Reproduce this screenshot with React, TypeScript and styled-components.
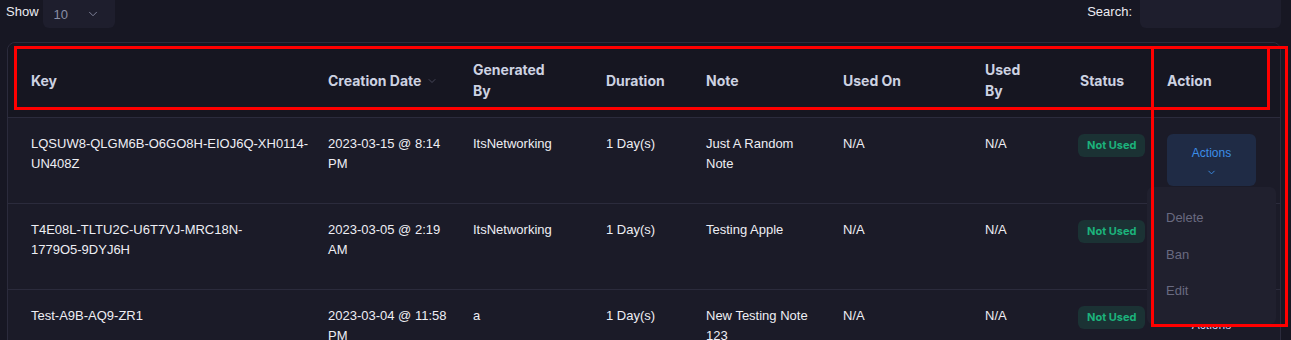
import React from "react";
import styled, { createGlobalStyle } from "styled-components";
import { ChevronDown } from "lucide-react";

const GlobalStyle = createGlobalStyle`
  body {
    margin: 0;
    background: #171723;
    font-family: "Liberation Sans", Arial, sans-serif;
    color: #e8e8ef;
    overflow: hidden;
  }
`;

interface KeyRow {
  key: string[];
  created: string;
  by: string;
  duration: string;
  note: string;
  usedOn: string;
  usedBy: string;
}

// keys wrap at the same spots as the live table
const rows: KeyRow[] = [
  {
    key: ["LQSUW8-QLGM6B-O6GO8H-EIOJ6Q-XH0114-", "UN408Z"],
    created: "2023-03-15 @ 8:14 PM",
    by: "ItsNetworking",
    duration: "1 Day(s)",
    note: "Just A Random Note",
    usedOn: "N/A",
    usedBy: "N/A",
  },
  {
    key: ["T4E08L-TLTU2C-U6T7VJ-MRC18N-", "1779O5-9DYJ6H"],
    created: "2023-03-05 @ 2:19 AM",
    by: "ItsNetworking",
    duration: "1 Day(s)",
    note: "Testing Apple",
    usedOn: "N/A",
    usedBy: "N/A",
  },
  {
    key: ["Test-A9B-AQ9-ZR1"],
    created: "2023-03-04 @ 11:58 PM",
    by: "a",
    duration: "1 Day(s)",
    note: "New Testing Note 123",
    usedOn: "N/A",
    usedBy: "N/A",
  },
];

const colWidths = [320, 145, 133, 100, 137, 142, 95, 87, 113];

const headers = [
  ["Key"],
  ["Creation Date"],
  ["Generated", "By"],
  ["Duration"],
  ["Note"],
  ["Used On"],
  ["Used", "By"],
  ["Status"],
  ["Action"],
];

const Page = styled.div`
  position: relative;
  width: 1291px;
  height: 340px;
  padding: 0 10px 0 7px;
  box-sizing: border-box;
`;

const TopBar = styled.div`
  display: flex;
  justify-content: space-between;
  align-items: flex-start;
  height: 42px;
  margin-left: -1px;
`;

const Group = styled.div`
  display: flex;
  align-items: center;
  gap: 4px;
  margin-top: -8px;
`;

const SearchGroup = styled(Group)`
  gap: 8px;
`;

const Label = styled.span`
  font-size: 13px;
  color: #ececf2;
  margin-top: 8px;
  align-self: flex-start;
  line-height: 24px;
`;

const SelectBox = styled.div`
  width: 72px;
  height: 36px;
  background: #1e1e2d;
  border-radius: 6px;
  display: flex;
  align-items: center;
  justify-content: space-between;
  padding: 8px 15px 0 11px;
  box-sizing: border-box;
  font-size: 13px;
  color: #8a8ea6;
`;

const SearchInput = styled.div`
  width: 141px;
  height: 36px;
  background: #1e1e2d;
  border-radius: 6px;
`;

const Card = styled.div`
  border: 1px solid #2b2b3c;
  border-radius: 8px;
  width: 1274px;
  box-sizing: border-box;
`;

const Table = styled.table`
  table-layout: fixed;
  border-collapse: collapse;
  width: 1272px;
`;

const HeadCell = styled.th`
  height: 74px;
  padding: 0 16px 0 0;
  text-align: left;
  vertical-align: middle;
  font-family: Inter, "Liberation Sans", sans-serif;
  font-weight: 700;
  font-size: 14px;
  line-height: 21px;
  color: #cdd2e1;
  background: #161621;
  border-bottom: 1px solid #2b2b3c;
  white-space: nowrap;
  &:first-child {
    padding-left: 23px;
    border-top-left-radius: 8px;
  }
  &:last-child {
    border-top-right-radius: 8px;
  }
`;

const SortMark = styled.span`
  display: inline-flex;
  vertical-align: middle;
  margin-left: 5px;
  margin-top: -2px;
  color: #55566a;
`;

const Row = styled.tr`
  background: #1b1b28;
  border-bottom: 1px solid #2b2b3c;
`;

const Cell = styled.td`
  height: 53px;
  padding: 16px 20px 16px 0;
  vertical-align: top;
  font-size: 13px;
  line-height: 19.5px;
  color: #eeeef4;
  &:first-child {
    padding-left: 23px;
    padding-right: 4px;
  }
`;

const ActionCell = styled(Cell)`
  position: relative;
`;

const Badge = styled.span`
  display: inline-block;
  margin-left: -2px;
  padding: 4px 9px;
  border-radius: 6px;
  background: #1b3234;
  color: #1cb37c;
  font-family: Inter, "Liberation Sans", sans-serif;
  font-weight: 700;
  font-size: 11px;
  line-height: 15px;
`;

const ActionButton = styled.div<{ $ghost?: boolean }>`
  width: 89px;
  height: 52px;
  border-radius: 6px;
  background: ${(p) => (p.$ghost ? "transparent" : "#1f2b45")};
  color: ${(p) => (p.$ghost ? "#c9cbef" : "#3c8ee8")};
  font-size: 12px;
  display: flex;
  flex-direction: column;
  align-items: center;
  justify-content: center;
  gap: 3px;
  padding-top: 2px;
  box-sizing: border-box;
`;

const Menu = styled.div`
  position: absolute;
  top: 69px;
  left: -20px;
  width: 129px;
  height: 137px;
  background: #20202e;
  border-radius: 6px;
  display: flex;
  flex-direction: column;
  padding-top: 21px;
  box-sizing: border-box;
  z-index: 2;
`;

const MenuItem = styled.div`
  height: 36.5px;
  padding-left: 19px;
  font-size: 13px;
  color: #696a80;
`;

const Mark = styled.div<{ x: number; y: number; w: number; h: number }>`
  position: absolute;
  left: ${(p) => p.x}px;
  top: ${(p) => p.y}px;
  width: ${(p) => p.w}px;
  height: ${(p) => p.h}px;
  border: 3px solid #ff0000;
  box-sizing: border-box;
  pointer-events: none;
  z-index: 5;
`;

function Lines({ parts }: { parts: string[] }) {
  return (
    <>
      {parts.map((part, i) => (
        <React.Fragment key={i}>
          {i > 0 && <br />}
          {part}
        </React.Fragment>
      ))}
    </>
  );
}

export default function App() {
  return (
    <Page>
      <GlobalStyle />
      <TopBar>
        <Group>
          <Label>Show</Label>
          <SelectBox>
            <span>10</span>
            <ChevronDown size={14} strokeWidth={1.5} />
          </SelectBox>
        </Group>
        <SearchGroup>
          <Label>Search:</Label>
          <SearchInput />
        </SearchGroup>
      </TopBar>
      <Card>
        <Table>
          <colgroup>
            {colWidths.map((w, idx) => (
              <col key={idx} style={{ width: w }} />
            ))}
          </colgroup>
          <thead>
            <tr>
              {headers.map((h, idx) => (
                <HeadCell key={idx}>
                  <Lines parts={h} />
                  {idx === 1 && (
                    <SortMark>
                      <ChevronDown size={12} strokeWidth={1.5} />
                    </SortMark>
                  )}
                </HeadCell>
              ))}
            </tr>
          </thead>
          <tbody>
            {rows.map((r, idx) => (
              <Row key={idx}>
                <Cell>
                  <Lines parts={r.key} />
                </Cell>
                <Cell>{r.created}</Cell>
                <Cell>{r.by}</Cell>
                <Cell>{r.duration}</Cell>
                <Cell>{r.note}</Cell>
                <Cell>{r.usedOn}</Cell>
                <Cell>{r.usedBy}</Cell>
                <Cell>
                  <Badge>Not Used</Badge>
                </Cell>
                <ActionCell>
                  <ActionButton $ghost={idx === 2}>
                    <span>Actions</span>
                    <ChevronDown size={11} strokeWidth={2} />
                  </ActionButton>
                  {idx === 0 && (
                    <Menu>
                      <MenuItem>Delete</MenuItem>
                      <MenuItem>Ban</MenuItem>
                      <MenuItem>Edit</MenuItem>
                    </Menu>
                  )}
                </ActionCell>
              </Row>
            ))}
          </tbody>
        </Table>
      </Card>
      <Mark x={14} y={46} w={1256} h={64} />
      <Mark x={1151} y={46} w={137} h={281} />
    </Page>
  );
}
